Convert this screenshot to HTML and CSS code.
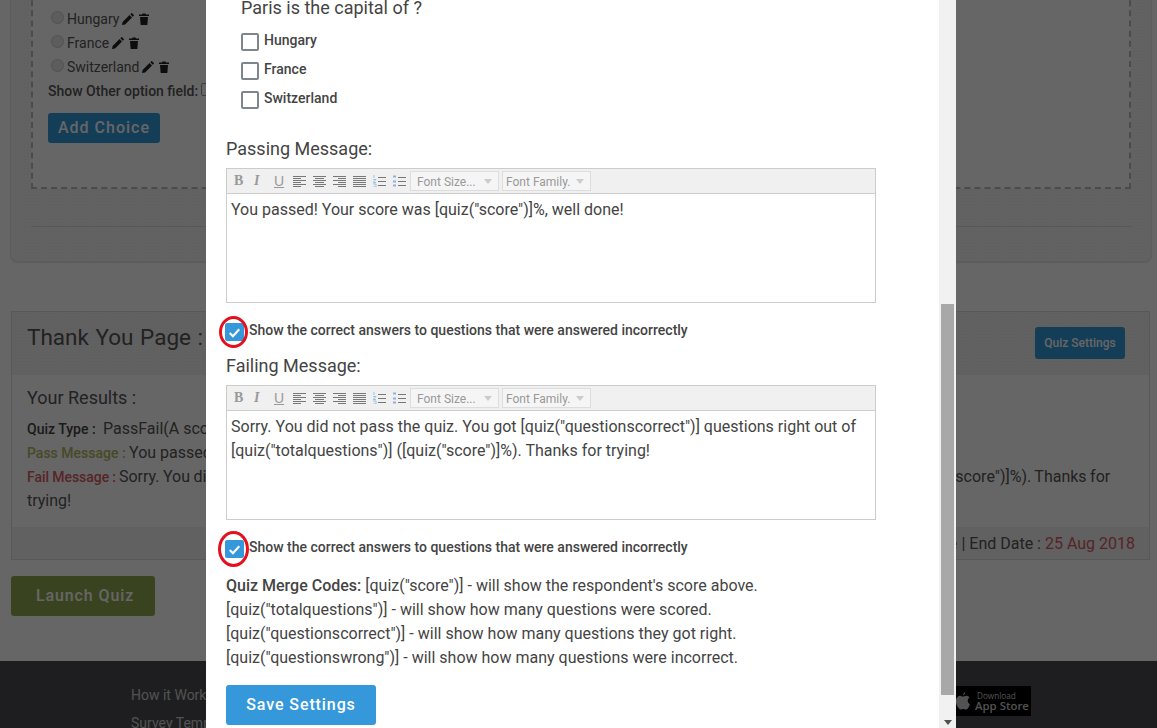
FILE: index.html
```html
<!DOCTYPE html>
<html lang="en">
<head>
<meta charset="utf-8">
<title>Quiz Settings</title>
<link rel="stylesheet" href="styles.css">
</head>
<body>
<div class="page">
  <section class="builder">
    <div class="dashed">
      <ul class="choices">
        <li><span class="radio"></span>Hungary<svg class="ic" viewBox="0 0 12 12"><path d="M0 12l.6-3L7.500 2l2.500 2.500-6.900 6.900zM8.300 1.200L9.300.2q.4-.3.8 0l1.700 1.700q.3.4 0 .8l-1 1z"/></svg><svg class="ic" viewBox="0 0 12 12"><path d="M1 1.500h3L4.500.5h3l.5 1h3v1.500H1zM2 4h8l-.6 7.500q-.1.5-.7.500H3.300q-.6 0-.7-.5z"/></svg></li>
        <li><span class="radio"></span>France<svg class="ic" viewBox="0 0 12 12"><path d="M0 12l.6-3L7.500 2l2.500 2.500-6.900 6.900zM8.300 1.200L9.300.2q.4-.3.8 0l1.700 1.700q.3.4 0 .8l-1 1z"/></svg><svg class="ic" viewBox="0 0 12 12"><path d="M1 1.500h3L4.500.5h3l.5 1h3v1.500H1zM2 4h8l-.6 7.500q-.1.5-.7.500H3.300q-.6 0-.7-.5z"/></svg></li>
        <li><span class="radio"></span>Switzerland<svg class="ic" viewBox="0 0 12 12"><path d="M0 12l.6-3L7.500 2l2.500 2.500-6.900 6.900zM8.300 1.200L9.300.2q.4-.3.8 0l1.700 1.700q.3.4 0 .8l-1 1z"/></svg><svg class="ic" viewBox="0 0 12 12"><path d="M1 1.500h3L4.500.5h3l.5 1h3v1.500H1zM2 4h8l-.6 7.500q-.1.5-.7.500H3.300q-.6 0-.7-.5z"/></svg></li>
      </ul>
      <div class="other">Show Other option field:<span class="mini"></span></div>
      <button class="add">Add Choice</button>
    </div>
    <div class="rule"></div>
  </section>

  <section class="thanks">
    <header class="thanks-head">
      <h2>Thank You Page : Congratulations</h2>
      <button class="settings">Quiz Settings</button>
    </header>
    <div class="thanks-body">
      <h3>Your Results :</h3>
      <p><b class="qt">Quiz Type : </b>&nbsp;PassFail(A score is given and pass or fail message is shown)</p>
      <p><b class="pm">Pass Message : </b>You passed! Your score was [quiz("score")]%, well done!</p>
      <p class="fail"><b class="fm">Fail Message : </b>Sorry. You did not pass the quiz. You got [quiz("questionscorrect")] questions right out of [quiz("totalquestions")] ([quiz("score")]%). Thanks for trying!</p>
    </div>
    <footer class="thanks-foot">Start Date : <span class="date">Date</span> | End Date : <span class="date">25 Aug 2018</span></footer>
  </section>

  <button class="launch">Launch Quiz</button>

  <footer class="site">
    <nav class="links"><a>How it Works</a><a>Survey Templates</a></nav>
    <div class="store">
      <svg viewBox="0 0 16 20"><path d="M11 0q.2 2.300-2.500 4Q8 2 11 0zM8 5.300C9.500 5.300 10.500 4.300 12 4.300q2.300 0 3.500 1.800-2.300 1.500-2 4 .3 2.500 2.500 3.400-1.500 4.500-3.500 5.500-1 .4-2.300-.2-1.700-.6-3.200.1-1.300.5-2.200-.4C1.800 15.500.5 12 1 9c.4-3 2.500-4.700 4.500-4.700 1 0 1.700 1 2.500 1z"/></svg>
      <div class="store-t"><small>Download</small><strong>App Store</strong></div>
    </div>
  </footer>
</div>

<div class="overlay"></div>

<div class="modal">
  <div class="modal-body">
    <p class="question">Paris is the capital of ?</p>
    <label class="opt"><span class="box"></span>Hungary</label>
    <label class="opt"><span class="box"></span>France</label>
    <label class="opt"><span class="box"></span>Switzerland</label>

    <h4 class="msg-title first">Passing Message:</h4>
    <div class="editor">
      <div class="toolbar">
        <span class="t b">B</span><span class="t i">I</span><span class="t u">U</span>
        <svg class="al" viewBox="0 0 13 12"><path d="M0 1.500h13M0 3.500h8M0 5.500h13M0 7.500h8M0 9.500h13M0 11.500h8"/></svg>
        <svg class="al" viewBox="0 0 13 12"><path d="M0 1.500h13M2 3.500h9M0 5.500h13M2 7.500h9M0 9.500h13M2 11.500h9"/></svg>
        <svg class="al" viewBox="0 0 13 12"><path d="M0 1.500h13M5 3.500h8M0 5.500h13M5 7.500h8M0 9.500h13M5 11.500h8"/></svg>
        <svg class="al" viewBox="0 0 13 12"><path d="M0 1.500h13M0 3.500h13M0 5.500h13M0 7.500h13M0 9.500h13M0 11.500h13"/></svg>
        <svg class="al" viewBox="0 0 13 12"><path class="bl" d="M1 0v3M0 4.500h3L0 7.500h3M0 9h3v3H0"/><path d="M5 2.500h8M5 6.500h8M5 10.500h8"/></svg>
        <svg class="al" viewBox="0 0 13 12"><path class="bd" d="M0 1.500h3M0 6.500h3M0 10.500h3"/><path d="M5 2.500h8M5 6.500h8M5 10.500h8"/></svg>
        <span class="sel s1">Font Size...</span><span class="sel s2">Font Family.</span>
      </div>
      <div class="content">You passed! Your score was [quiz("score")]%, well done!</div>
    </div>
    <div class="check"><span class="tick"><svg viewBox="0 0 18 18"><path d="M4.500 9.500l3 3 6-6.500"/></svg></span><span class="ring"></span><span class="check-l">Show the correct answers to questions that were answered incorrectly</span></div>

    <h4 class="msg-title">Failing Message:</h4>
    <div class="editor">
      <div class="toolbar">
        <span class="t b">B</span><span class="t i">I</span><span class="t u">U</span>
        <svg class="al" viewBox="0 0 13 12"><path d="M0 1.500h13M0 3.500h8M0 5.500h13M0 7.500h8M0 9.500h13M0 11.500h8"/></svg>
        <svg class="al" viewBox="0 0 13 12"><path d="M0 1.500h13M2 3.500h9M0 5.500h13M2 7.500h9M0 9.500h13M2 11.500h9"/></svg>
        <svg class="al" viewBox="0 0 13 12"><path d="M0 1.500h13M5 3.500h8M0 5.500h13M5 7.500h8M0 9.500h13M5 11.500h8"/></svg>
        <svg class="al" viewBox="0 0 13 12"><path d="M0 1.500h13M0 3.500h13M0 5.500h13M0 7.500h13M0 9.500h13M0 11.500h13"/></svg>
        <svg class="al" viewBox="0 0 13 12"><path class="bl" d="M1 0v3M0 4.500h3L0 7.500h3M0 9h3v3H0"/><path d="M5 2.500h8M5 6.500h8M5 10.500h8"/></svg>
        <svg class="al" viewBox="0 0 13 12"><path class="bd" d="M0 1.500h3M0 6.500h3M0 10.500h3"/><path d="M5 2.500h8M5 6.500h8M5 10.500h8"/></svg>
        <span class="sel s1">Font Size...</span><span class="sel s2">Font Family.</span>
      </div>
      <div class="content">Sorry. You did not pass the quiz. You got [quiz("questionscorrect")] questions right out of [quiz("totalquestions")] ([quiz("score")]%). Thanks for trying!</div>
    </div>
    <div class="check second"><span class="tick"><svg viewBox="0 0 18 18"><path d="M4.500 9.500l3 3 6-6.500"/></svg></span><span class="ring"></span><span class="check-l">Show the correct answers to questions that were answered incorrectly</span></div>

    <div class="codes">
      <div><b>Quiz Merge Codes:</b> [quiz("score")] - will show the respondent's score above.</div>
      <div>[quiz("totalquestions")] - will show how many questions were scored.</div>
      <div>[quiz("questionscorrect")] - will show how many questions they got right.</div>
      <div>[quiz("questionswrong")] - will show how many questions were incorrect.</div>
    </div>
    <button class="save">Save Settings</button>
  </div>
  <div class="scrollbar"><span class="thumb"></span><span class="arrow"></span></div>
</div>
</body>
</html>
```
FILE: styles.css
```css
* { box-sizing: border-box; }
html, body { margin: 0; height: 728px; overflow: hidden; background: #fff; }
body { font-family: Roboto, "Liberation Sans", sans-serif; color: #555; font-size: 16px; }
button { font-family: inherit; border: 0; color: #fff; background: #3498db; }
.page { height: 728px; overflow: hidden; display: flex; flex-direction: column; }

.builder { margin: -10px 5px 0 10px; height: 272px; padding: 0 20px; border: 1px solid #e6e6e6; border-top: 0; border-radius: 0 0 8px 8px; background: #f6f6f6 radial-gradient(circle, #ededed 35%, transparent 40%) 0 0 / 3px 3px; box-shadow: 0 1px 2px rgba(0,0,0,.1); flex: none; }
.dashed { height: 199px; border: 2px dashed #bbb; border-top: 0; padding: 17px 15px 0; background: #fff; }
.choices { list-style: none; margin: 0; padding: 0; font-size: 14px; }
.choices li { height: 24px; display: flex; align-items: center; gap: 2px; white-space: pre; }
.radio { width: 13px; height: 13px; border-radius: 50%; background: #e8e8e8; border: 1px solid #ccc; margin: -4px 1px 0 3px; }
.ic { width: 12px; height: 12px; margin-left: 1px; fill: #222; }
.ic + .ic { margin-left: 2px; }
.other { font-size: 14px; font-weight: 500; height: 24px; line-height: 24px; display: flex; gap: 3px; white-space: pre; }
.mini { width: 12px; height: 13px; border: 1px solid #999; border-radius: 2px; margin-top: 4px; }
.add { width: 112px; height: 30px; margin-top: 10px; padding-bottom: 2px; font-size: 16px; font-weight: 500; letter-spacing: 1px; border-radius: 3px; }
.rule { height: 1px; background: #ddd; margin-top: 37px; margin-right: -1px; }

.thanks { margin: 49px 7px 0 11px; height: 249px; border: 1px solid #ddd; display: flex; flex-direction: column; flex: none; }
.thanks-head { height: 63px; background: #f2f2f2 radial-gradient(circle, #ebebeb 35%, transparent 40%) 0 0 / 3px 3px; display: flex; align-items: flex-start; justify-content: space-between; padding: 0 24px 0 15px; flex: none; overflow: hidden; }
.thanks-head h2 { margin: 10px 0 0; font-size: 22.500px; font-weight: 400; line-height: 30px; white-space: nowrap; word-spacing: 1px; }
.settings { width: 90px; height: 32px; margin-top: 15px; font-size: 12px; font-weight: 500; border-radius: 3px; }
.thanks-body { padding: 10px 15px 0; flex: 1; font-size: 16px; line-height: 24px; }
.thanks-body h3 { margin: 0 0 6px; font-size: 18px; font-weight: 400; line-height: 26px; }
.thanks-body p { margin: 0; }
.thanks-body b { font-size: 14px; font-weight: 500; }
.fail { word-spacing: -.5px; }
.qt { color: #444; }
.pm { color: #b4b85f; }
.fm { color: #d85c64; }
.thanks-foot { height: 32px; background: #f2f2f2; text-align: right; padding-right: 14px; line-height: 33px; flex: none; }
.date { color: #d85c64; }
.launch { width: 144px; height: 40px; margin: 16px 0 0 11px; padding: 0 0 2px 4px; font-size: 16px; font-weight: 500; letter-spacing: .9px; background: #8ea84e; border-radius: 3px; flex: none; }

.site { margin-top: 45px; height: 67px; flex: none; background: #4b4d52; display: flex; justify-content: space-between; padding: 22px 126px 0 131px; }
.links { display: flex; flex-direction: column; gap: 10px; font-size: 14px; color: #ccc; line-height: 18px; margin-top: 3px; }
.store { width: 120px; height: 30px; background: #000; color: #ccc; display: flex; align-items: center; gap: 5px; padding-left: 44px; margin-top: 3px; }
.store svg { width: 15px; height: 20px; fill: #ccc; flex: none; }
.store-t { display: flex; flex-direction: column; line-height: 10px; font-family: "Open Sans", sans-serif; white-space: nowrap; }
.store small { font-size: 8.200px; margin-left: 2px; }
.store strong { font-size: 11.400px; font-weight: 600; }

.overlay { position: absolute; inset: 0; background: rgba(0,0,0,.6); }

.modal { position: absolute; left: 206px; top: 0; width: 750px; height: 728px; background: #fff; overflow: hidden; color: #444; }
.modal-body { padding: 0 80px 0 20px; width: 733px; }
.question { margin: -5px 0 0 15px; font-size: 18px; line-height: 26px; height: 31px; }
.opt { display: flex; align-items: center; gap: 5px; height: 29px; margin-left: 15px; padding-bottom: 2px; font-size: 14px; font-weight: 500; }
.box { width: 18px; height: 18px; border: 2px solid #7d868c; border-radius: 2px; margin-top: 5px; background: #fff; }
.msg-title { margin: 0; font-size: 18px; font-weight: 400; line-height: 24px; height: 31px; }
.msg-title.first { margin-top: 24px; }
.editor { width: 650px; border: 1px solid #ccc; }
.toolbar { height: 25px; background: #f0f0f0; border-bottom: 1px solid #ccc; display: flex; align-items: center; padding-left: 7px; color: #999; }
.t { width: 20px; font: 14px "Liberation Serif", serif; }
.t.b { font-weight: 700; }
.t.i { font-style: italic; font-weight: 700; }
.t.u { width: 19px; text-decoration: underline; font-family: "Liberation Sans", sans-serif; font-weight: 400; }
.al { width: 13px; height: 12px; margin-right: 7px; fill: none; stroke: #777; stroke-width: 1; flex: none; }
.al:last-of-type { margin-right: 4px; }
.al .bl { stroke: #9cc0e6; }
.al .bd { stroke: #8fb2dd; stroke-width: 2; }
.sel { height: 20px; width: 89px; border: 1px solid #ddd; background: #f5f5f5; font-size: 12px; line-height: 20px; padding-left: 6px; margin-right: 3px; position: relative; color: #999; flex: none; overflow: hidden; white-space: nowrap; }
.sel.s2 { padding-left: 3px; }
.sel::after { content: ""; position: absolute; right: 6px; top: 7px; border: 4px solid transparent; border-top: 5px solid #ccc; }
.content { height: 108px; padding: 4px; font-size: 16px; line-height: 24px; }
.check { height: 34px; position: relative; display: flex; align-items: center; font-size: 14px; font-weight: 500; margin-top: 10px; }
.tick { width: 19px; height: 18px; margin: 4px 0 0 -1px; background: #3498db; border-radius: 2px; display: block; flex: none; }
.tick svg { display: block; fill: none; stroke: #fff; stroke-width: 2; }
.ring { position: absolute; left: -7px; top: 3px; width: 29px; height: 32px; border: 3px solid #e3101e; border-radius: 50%; }
.second .ring { left: -8px; top: 1px; width: 31px; height: 36px; }
.check-l { margin-left: 5px; position: relative; }
.check + .msg-title { margin-top: 7px; }
.codes { margin-top: 10px; line-height: 24px; font-size: 16px; white-space: nowrap; }
.codes b { font-weight: 500; }
.save { display: block; width: 150px; height: 40px; margin-top: 15px; padding-bottom: 2px; font-size: 16px; font-weight: 500; letter-spacing: .9px; border-radius: 3px; }

.scrollbar { position: absolute; right: 0; top: 0; width: 17px; height: 728px; background: #f1f1f1; }
.thumb { position: absolute; left: 2px; right: 2px; top: 304px; height: 391px; background: #a8a8a8; }
.arrow { position: absolute; left: 5px; bottom: 3px; border: 4px solid transparent; border-top: 5px solid #505050; border-bottom: 0; }
```
